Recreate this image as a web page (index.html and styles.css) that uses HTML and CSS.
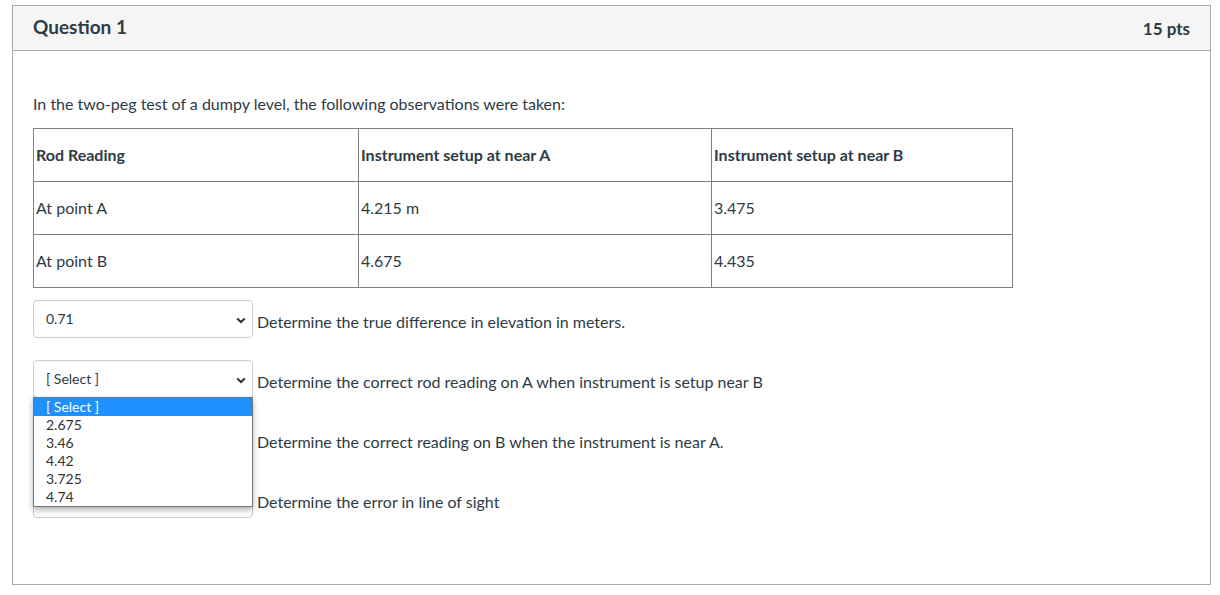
FILE: index.html
```html
<!DOCTYPE html>
<html lang="en">
<head>
<meta charset="utf-8">
<title>Question 1</title>
<link rel="stylesheet" href="styles.css">
</head>
<body>
<div class="question">
  <div class="q-header">
    <span class="q-title">Question 1</span>
    <span class="q-points">15 pts</span>
  </div>
  <div class="q-body">
    <p class="q-text">In the two-peg test of a dumpy level, the following observations were taken:</p>
    <table class="obs">
      <colgroup>
        <col class="c1"><col class="c2"><col class="c3">
      </colgroup>
      <tr><th>Rod Reading</th><th>Instrument setup at near A</th><th>Instrument setup at near B</th></tr>
      <tr><td>At point A</td><td>4.215 m</td><td>3.475</td></tr>
      <tr><td>At point B</td><td>4.675</td><td>4.435</td></tr>
    </table>
    <div class="answers">
      <div class="ans-row">
        <div class="sel" role="combobox"><span class="sel-val">0.71</span><svg class="chev" width="10" height="7" viewBox="0 0 10 7"><path d="M1.2 1.4 L5 5 L8.8 1.4" fill="none" stroke="#333" stroke-width="2"/></svg></div>
        <span class="ans-label">Determine the true difference in elevation in meters.</span>
      </div>
      <div class="ans-row">
        <div class="sel open" role="combobox"><span class="sel-val">[ Select ]</span><svg class="chev" width="10" height="7" viewBox="0 0 10 7"><path d="M1.2 1.4 L5 5 L8.8 1.4" fill="none" stroke="#333" stroke-width="2"/></svg>
          <ul class="dropdown">
            <li class="active">[ Select ]</li>
            <li>2.675</li>
            <li>3.46</li>
            <li>4.42</li>
            <li>3.725</li>
            <li>4.74</li>
          </ul>
        </div>
        <span class="ans-label">Determine the correct rod reading on A when instrument is setup near B</span>
      </div>
      <div class="ans-row">
        <div class="sel covered" role="combobox"><span class="sel-val">[ Select ]</span><svg class="chev" width="10" height="7" viewBox="0 0 10 7"><path d="M1.2 1.4 L5 5 L8.8 1.4" fill="none" stroke="#333" stroke-width="2"/></svg></div>
        <span class="ans-label">Determine the correct reading on B when the instrument is near A.</span>
      </div>
      <div class="ans-row">
        <div class="sel covered" role="combobox"><span class="sel-val">[ Select ]</span><svg class="chev" width="10" height="7" viewBox="0 0 10 7"><path d="M1.2 1.4 L5 5 L8.8 1.4" fill="none" stroke="#333" stroke-width="2"/></svg></div>
        <span class="ans-label">Determine the error in line of sight</span>
      </div>
    </div>
  </div>
</div>
</body>
</html>
```
FILE: styles.css
```css
html, body {
  margin: 0;
  padding: 0;
  background: #fff;
}
body {
  font-family: Lato, "Open Sans", sans-serif;
  color: #2d3b45;
  font-size: 16px;
  line-height: 1.5;
}
.question {
  box-sizing: border-box;
  margin: 5px 0 0 12px;
  width: 1199px;
  height: 580px;
  border: 1px solid #aaaaaa;
}
.q-header {
  height: 44px;
  background: #f5f5f5;
  border-bottom: 1px solid #aaaaaa;
  display: flex;
  align-items: center;
  justify-content: space-between;
  padding: 0 20px 0 20px;
}
.q-title {
  font-weight: 700;
  font-size: 19px;
  margin-top: -2px;
}
.q-points {
  font-weight: 700;
  font-size: 17px;
  margin-top: 1px;
}
.q-body {
  padding: 41px 20px 0 20px;
}
.q-text {
  margin: 0 0 12px 0;
}
.obs {
  border-collapse: collapse;
  width: 979px;
  table-layout: fixed;
}
.obs col.c1 { width: 325px; }
.obs col.c2 { width: 353px; }
.obs col.c3 { width: 301px; }
.obs th, .obs td {
  border: 1px solid #808080;
  height: 53px;
  padding: 0 2px;
  text-align: left;
  vertical-align: middle;
  box-sizing: border-box;
}
.obs th {
  font-weight: 700;
}
.answers {
  margin-top: 12px;
  display: flex;
  flex-direction: column;
  gap: 22px;
}
.ans-row {
  display: flex;
  align-items: flex-start;
  gap: 4px;
}
.sel {
  position: relative;
  box-sizing: border-box;
  width: 220px;
  height: 38px;
  border: 1px solid #c7cdd1;
  border-radius: 4px;
  background: #fff;
  display: flex;
  align-items: center;
  padding: 0 6px 0 12px;
  font-size: 14px;
  line-height: 20px;
  flex-shrink: 0;
}
.sel-val {
  flex: 1;
  margin-top: -1px;
}
.sel.covered .sel-val {
  visibility: hidden;
}
.chev {
  display: block;
  margin-top: 3px;
}
.ans-label {
  padding-top: 10px;
  line-height: 24px;
  white-space: nowrap;
}
.dropdown {
  position: absolute;
  top: 36px;
  left: -1px;
  width: 220px;
  box-sizing: border-box;
  margin: 0;
  padding: 0;
  list-style: none;
  background: #fff;
  border: 1px solid #767676;
  box-shadow: 0 3px 6px rgba(0, 0, 0, 0.3);
  z-index: 10;
  color: #333;
}
.dropdown li {
  height: 18px;
  line-height: 18px;
  padding-left: 12px;
  font-size: 14px;
}
.dropdown li.active {
  background: #1e90ff;
  color: #fff;
}
```
